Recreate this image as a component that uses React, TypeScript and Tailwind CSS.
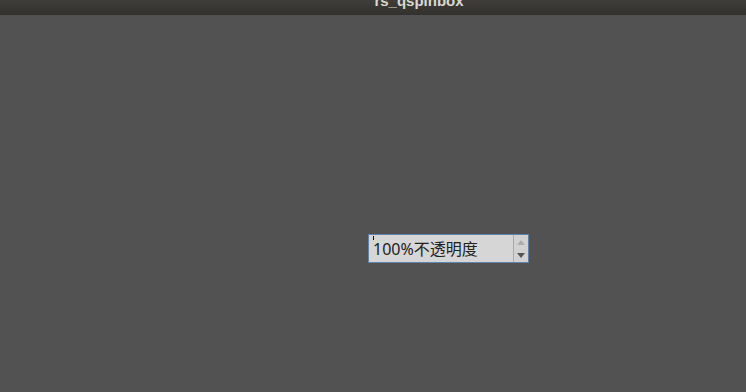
import React from 'react';

function SpinBox() {
  return (
    <div className="relative flex h-[29px] w-[161px] border border-[#5f84ab] bg-[#d6d6d6]">
      <span className="absolute left-[4px] top-[1px] h-[4px] w-[1px] bg-[#111]" />
      <div className="flex flex-1 items-center pl-[4px] pt-[1px] text-[16px] leading-none text-[#222] [font-family:'Noto_Sans','Noto_Sans_CJK_SC',sans-serif]">
        100%不透明度
      </div>
      <div className="flex w-[15px] flex-col items-center justify-center gap-[8px] border-l border-[#a9a9a9] bg-[#d2d2d2]">
        <svg width="8" height="5" viewBox="0 0 8 5">
          <path d="M0 5 L4 0 L8 5 Z" fill="#acacac" />
        </svg>
        <svg width="8" height="5" viewBox="0 0 8 5">
          <path d="M0 0 L8 0 L4 5 Z" fill="#555" />
        </svg>
      </div>
    </div>
  );
}

export default function App() {
  return (
    <div className="flex h-[392px] w-[746px] flex-col bg-[#525252]">
      <div className="flex h-[15px] items-start justify-center overflow-hidden bg-gradient-to-b from-[#3e3d39] to-[#32312d]">
        <span className="ml-[92px] mt-[-7px] text-[15px] font-bold leading-none text-[#dcd8cf] [font-family:'Liberation_Sans',sans-serif]">
          rs_qspinbox
        </span>
      </div>
      <div className="relative flex-1">
        <div className="absolute left-[368px] top-[219px]">
          <SpinBox />
        </div>
      </div>
    </div>
  );
}
